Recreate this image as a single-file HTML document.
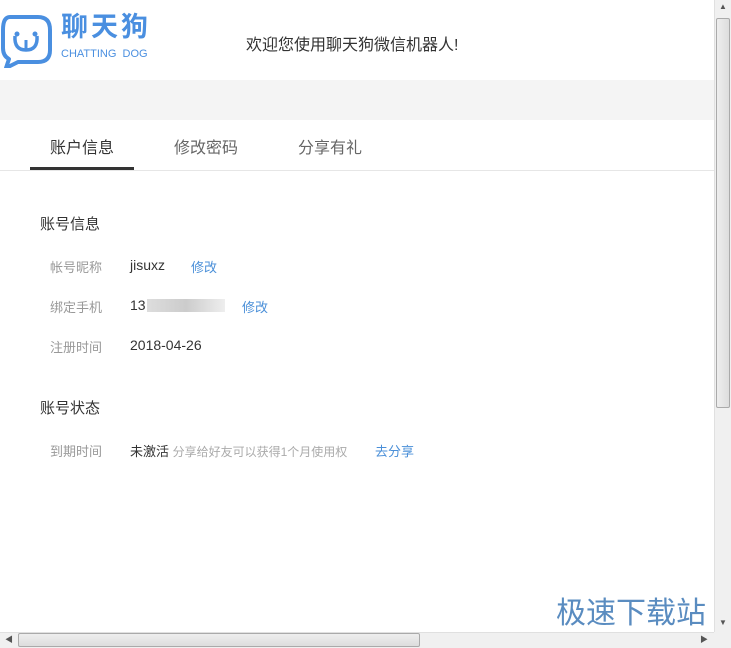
<!DOCTYPE html>
<html><head><meta charset="utf-8"><style>
*{margin:0;padding:0;box-sizing:border-box}
body{width:731px;height:648px;overflow:hidden;background:#fff;font-family:"Liberation Sans","Noto Sans CJK SC",sans-serif;position:relative;color:#333}
.a{position:absolute;white-space:nowrap}
.lbl{color:#999;font-size:13px}
.val{color:#333;font-size:14px}
.lnk{color:#4a8fd8;font-size:13px}
</style></head><body>
<svg class="a" style="left:0;top:14px" width="52" height="54" viewBox="0 0 52 54">
<path d="M10 3 H38 Q50 3 50 16 V36 Q50 48 38 48 H18 L6 54 L9 45 Q3 42 3 34 V16 Q3 3 10 3 Z" fill="none" stroke="#4a8fe0" stroke-width="4" stroke-linejoin="round"/>
<path d="M15 22 Q14 36 26 36 Q38 36 37 22" fill="none" stroke="#4a8fe0" stroke-width="3.5"/>
<circle cx="17" cy="20" r="2.5" fill="#4a8fe0"/><circle cx="35" cy="20" r="2.5" fill="#4a8fe0"/>
<path d="M26 26 V35" stroke="#4a8fe0" stroke-width="3"/>
</svg>
<div class="a" style="left:61px;top:12px;font-size:27px;font-weight:bold;color:#4a8fe0;letter-spacing:3px;line-height:30px">聊天狗</div>
<div class="a" style="left:61px;top:48px;font-size:11px;color:#4a8fe0">CHATTING&nbsp; DOG</div>
<div class="a" style="left:246px;top:31px;font-size:16px;color:#333">欢迎您使用聊天狗微信机器人!</div>
<div class="a" style="left:0;top:80px;width:714px;height:40px;background:#f4f4f4"></div>
<div class="a" style="left:50px;top:134px;font-size:16px;color:#333">账户信息</div>
<div class="a" style="left:174px;top:134px;font-size:16px;color:#666">修改密码</div>
<div class="a" style="left:298px;top:134px;font-size:16px;color:#666">分享有礼</div>
<div class="a" style="left:30px;top:167px;width:104px;height:3px;background:#333"></div>
<div class="a" style="left:0;top:170px;width:714px;height:1px;background:#e6e6e6"></div>
<div class="a" style="left:40px;top:213px;font-size:15px;color:#333">账号信息</div>
<div class="a lbl" style="left:50px;top:257px">帐号昵称</div>
<div class="a val" style="left:130px;top:257px">jisuxz</div>
<div class="a lnk" style="left:191px;top:257px">修改</div>
<div class="a lbl" style="left:50px;top:297px">绑定手机</div>
<div class="a val" style="left:130px;top:297px">13</div>
<div class="a" style="left:147px;top:299px;width:78px;height:13px;background:linear-gradient(90deg,#ddd,#ccc 50%,#eee)"></div>
<div class="a lnk" style="left:242px;top:297px">修改</div>
<div class="a lbl" style="left:50px;top:337px">注册时间</div>
<div class="a val" style="left:130px;top:337px">2018-04-26</div>
<div class="a" style="left:40px;top:397px;font-size:15px;color:#333">账号状态</div>
<div class="a lbl" style="left:50px;top:441px">到期时间</div>
<div class="a val" style="left:130px;top:441px;font-size:13px">未激活 <span style="color:#aaa;font-size:12px">分享给好友可以获得1个月使用权</span></div>
<div class="a lnk" style="left:375px;top:441px">去分享</div>
<div class="a" style="left:556px;top:596px;font-size:30px;color:#5a8cc0;line-height:36px">极速下载站</div>
<div class="a" style="left:714px;top:0;width:17px;height:632px;background:#f0f0f0;border-left:1px solid #e0e0e0"></div>
<div class="a" style="left:716px;top:18px;width:14px;height:390px;background:linear-gradient(90deg,#eee,#ddd);border:1px solid #aaa;border-radius:2px"></div>
<div class="a" style="left:719px;top:2px;font-size:8px;color:#555">▲</div>
<div class="a" style="left:719px;top:618px;font-size:8px;color:#555">▼</div>
<div class="a" style="left:0;top:632px;width:714px;height:16px;background:#f0f0f0;border-top:1px solid #e0e0e0"></div>
<div class="a" style="left:18px;top:633px;width:402px;height:14px;background:linear-gradient(#eee,#ddd);border:1px solid #aaa;border-radius:2px"></div>
<div class="a" style="left:5px;top:634px;font-size:8px;color:#555">◀</div>
<div class="a" style="left:700px;top:634px;font-size:8px;color:#555">▶</div>
<div class="a" style="left:714px;top:632px;width:17px;height:16px;background:#f0f0f0"></div>
</body></html>
